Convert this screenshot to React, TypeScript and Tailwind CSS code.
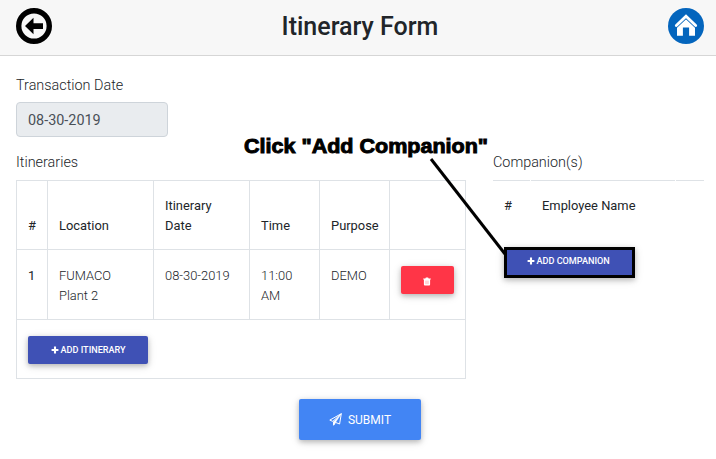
import type { ReactNode } from "react";

const raised = "shadow-[0_2px_5px_rgba(0,0,0,0.2),0_2px_10px_rgba(0,0,0,0.14)]";

function BackIcon() {
  return (
    <svg width="36" height="36" viewBox="0 0 36 36" aria-label="Back">
      <circle cx="18" cy="18" r="15.3" fill="none" stroke="#000" strokeWidth="5.4" />
      <path d="M9 18 L17.5 9.7 V15.2 H27 V20.9 H17.5 V26.3 Z" fill="#000" />
    </svg>
  );
}

function HomeIcon() {
  return (
    <svg width="36" height="36" viewBox="0 0 36 36" aria-label="Home">
      <circle cx="18" cy="18" r="18" fill="#0465bd" />
      <path d="M9 18.2 L18 9.8 L27 18.2 V27.8 H21.1 V19.6 H14.9 V27.8 H9 Z" fill="#fff" />
      <path d="M8.2 19.3 L18 10.2 L27.8 19.3" fill="none" stroke="#0465bd" strokeWidth="1.8" />
      <path d="M8.3 17.5 L18 8.2 L27.7 17.5" fill="none" stroke="#fff" strokeWidth="2.8" strokeLinecap="round" />
    </svg>
  );
}

function PlusIcon() {
  return (
    <svg width="8" height="8" viewBox="0 0 8 8" aria-hidden="true">
      <path d="M4 0.6V7.4M0.6 4H7.4" stroke="#fff" strokeWidth="2.1" />
    </svg>
  );
}

function TrashIcon() {
  return (
    <svg width="8" height="9" viewBox="0 0 8 9" aria-hidden="true">
      <path d="M0.2 1.6H2.3L2.9 0.5H5.1L5.7 1.6H7.8V2.5H7.1V7.6Q7.1 8.5 6.2 8.5H1.8Q0.9 8.5 0.9 7.6V2.5H0.2Z" fill="#fff" />
      <path d="M2.8 3.6V7.2M4 3.6V7.2M5.2 3.6V7.2" stroke="#ff3547" strokeWidth="0.3" />
    </svg>
  );
}

function PlaneIcon() {
  return (
    <svg width="13" height="13" viewBox="0 0 13 13" fill="none" stroke="#fff" strokeWidth="1" strokeLinejoin="round" aria-hidden="true">
      <path d="M12.3 0.7L0.8 7.1L3.8 8.4L12.3 0.7L10.6 11L6.5 9.4L4.6 12.2V8.8" />
      <path d="M4.6 8.8L12.3 0.7L6.5 9.4L4.6 12.2Z" fill="#fff" strokeWidth="0.4" />
    </svg>
  );
}

function Cell({ head, children }: { head?: boolean; children?: ReactNode }) {
  return (
    <div
      className={
        head
          ? "flex items-end border-r border-b border-[#dee2e6] pb-[13px] pl-[11px] font-normal"
          : "border-r border-b border-[#dee2e6] pt-4 pl-[11px]"
      }
    >
      {children}
    </div>
  );
}

export default function App() {
  return (
    <div className="relative h-[459px] w-[716px] overflow-hidden bg-white font-[Roboto,sans-serif] text-[12.9px] leading-5 font-light text-[#212529]">
      <header className="flex h-14 items-start justify-between border-b border-[#d6d6d6] bg-[#f7f7f7] pt-2 pr-3 pl-4">
        <BackIcon />
        <h1 className="pt-[2px] text-[25px] leading-[34px] font-medium">Itinerary Form</h1>
        <HomeIcon />
      </header>

      <main className="pt-5 pl-4">
        <div className="text-[14.4px] leading-5">Transaction Date</div>
        <div className="mt-[6px] flex h-[35px] w-[152px] items-center rounded-[4px] border border-[#ced4da] bg-[#e9ecef] pt-[2px] pl-[11px] text-[14.4px] font-normal text-[#495057]">
          08-30-2019
        </div>

        <div className="mt-4 flex items-start">
          <section className="w-[450px]">
            <h2 className="mb-[7px] text-[14.4px] leading-5 font-light">Itineraries</h2>
            <div className="grid grid-cols-[31px_106px_96px_70px_70px_76px] grid-rows-[69px_70px_59px] border-t border-l border-[#dee2e6]">
              <Cell head>#</Cell>
              <Cell head>Location</Cell>
              <Cell head>
                Itinerary
                <br />
                Date
              </Cell>
              <Cell head>Time</Cell>
              <Cell head>Purpose</Cell>
              <Cell head />
              <Cell>
                <span className="font-normal">1</span>
              </Cell>
              <Cell>
                FUMACO
                <br />
                Plant 2
              </Cell>
              <Cell>08-30-2019</Cell>
              <Cell>
                11:00
                <br />
                AM
              </Cell>
              <Cell>DEMO</Cell>
              <Cell>
                <button className={`flex h-7 w-[53px] items-center justify-center rounded-[2px] bg-[#ff3547] pt-[2px] pr-px text-white ${raised}`}>
                  <TrashIcon />
                </button>
              </Cell>
              <div className="col-span-6 border-r border-b border-[#dee2e6] pt-4 pl-[11px]">
                <button className={`flex h-7 w-[120px] items-center justify-center gap-[2px] rounded-[2px] bg-[#3f51b5] text-[9.1px] font-medium text-white ${raised}`}>
                  <PlusIcon />
                  <span className="w-[65px] text-left whitespace-nowrap">ADD ITINERARY</span>
                </button>
              </div>
            </div>
          </section>

          <section className="ml-[27px] w-[211px]">
            <h2 className="mb-[7px] text-[14.4px] leading-5 font-light">Companion(s)</h2>
            <div className="grid grid-cols-[37px_144px_28px] gap-x-px font-normal">
              <div className="h-[67px] border-t border-[#dee2e6] pt-[15px] pl-[11px]">#</div>
              <div className="border-t border-[#dee2e6] pt-[15px] pl-[11px]">Employee Name</div>
              <div className="border-t border-[#dee2e6]" />
            </div>
            <button className={`ml-[11px] flex h-[31px] w-[131px] items-center justify-center gap-[2px] border-[3px] border-black bg-[#3f51b5] pr-[2px] pb-[3px] text-[9.1px] font-medium text-white ${raised}`}>
              <PlusIcon />
              <span className="w-[74px] text-left whitespace-nowrap">ADD COMPANION</span>
            </button>
          </section>
        </div>

        <button className={`mt-5 ml-[283px] flex h-[41px] w-[122px] items-center justify-center gap-[6px] rounded-[2px] bg-[#4285f4] text-[12px] font-normal text-white ${raised}`}>
          <PlaneIcon />
          SUBMIT
        </button>
      </main>

      <div className="absolute top-[134px] left-[244px] origin-left scale-x-[1.11] font-['Liberation_Sans',sans-serif] text-[19.4px] leading-6 font-bold whitespace-nowrap text-black [-webkit-text-stroke:0.9px_black]">
        Click "Add Companion"
      </div>
      <svg className="absolute top-0 left-0" width="716" height="459" aria-hidden="true">
        <line x1="431" y1="159" x2="505" y2="254" stroke="#000" strokeWidth="3" />
      </svg>
    </div>
  );
}
